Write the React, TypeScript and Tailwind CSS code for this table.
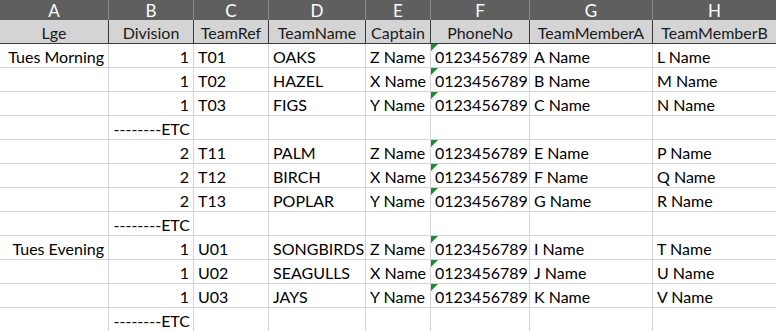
import React from "react";

const cols = ["A", "B", "C", "D", "E", "F", "G", "H"];
const widths = ["w-[109px]", "w-[85px]", "w-[75px]", "w-[97px]", "w-[65px]", "w-[99px]", "w-[123px]", "w-[124px]"];
const headers = ["Lge", "Division", "TeamRef", "TeamName", "Captain", "PhoneNo", "TeamMemberA", "TeamMemberB"];

type Row = string[] | null;
const rows: Row[] = [
  ["Tues Morning", "1", "T01", "OAKS", "Z Name", "0123456789", "A Name", "L Name"],
  ["", "1", "T02", "HAZEL", "X Name", "0123456789", "B Name", "M Name"],
  ["", "1", "T03", "FIGS", "Y Name", "0123456789", "C Name", "N Name"],
  null,
  ["", "2", "T11", "PALM", "Z Name", "0123456789", "E Name", "P Name"],
  ["", "2", "T12", "BIRCH", "X Name", "0123456789", "F Name", "Q Name"],
  ["", "2", "T13", "POPLAR", "Y Name", "0123456789", "G Name", "R Name"],
  null,
  ["Tues Evening", "1", "U01", "SONGBIRDS", "Z Name", "0123456789", "I Name", "T Name"],
  ["", "1", "U02", "SEAGULLS", "X Name", "0123456789", "J Name", "U Name"],
  ["", "1", "U03", "JAYS", "Y Name", "0123456789", "K Name", "V Name"],
  null,
];

function Tri() {
  return (
    <svg className="absolute left-0 top-0" width="7" height="7" viewBox="0 0 7 7">
      <polygon points="0,0 7,0 0,7" fill="#1f8a3b" />
    </svg>
  );
}

export default function App() {
  return (
    <div className="w-[776px] h-[331px] overflow-hidden bg-white text-black" style={{ fontFamily: "Lato, 'Liberation Sans', sans-serif" }}>
      <div className="flex h-[20px] bg-[#5f5f5f]">
        {cols.map((c, i) => (
          <div key={c} className={`${widths[i]} shrink-0 border-r border-[#8c8c8c] flex items-center justify-center text-white text-[17px] leading-none pt-[1px]`}>
            {c}
          </div>
        ))}
      </div>
      <div className="flex h-[24px] bg-[#d4d4d4] border-b border-[#3a3a3a]">
        {headers.map((h, i) => (
          <div key={h} className={`${widths[i]} shrink-0 border-r border-[#3a3a3a] flex items-center justify-center text-[16px] leading-none text-[#1a1a1a] pt-[2px]`}>
            {h}
          </div>
        ))}
      </div>
      {rows.map((r, ri) => (
        <div key={ri} className="flex h-[24px]">
          {cols.map((_, ci) => {
            let text = "";
            let align = "justify-start pl-[4px]";
            if (r) {
              text = r[ci];
              if (ci === 0 || ci === 1) align = "justify-end pr-[4px]";
            } else if (ci === 1) {
              text = "--------ETC";
              align = "justify-end pr-[3px]";
            }
            return (
              <div
                key={ci}
                className={`${widths[ci]} shrink-0 relative border-r border-b border-[#d4d4d4] flex items-center ${align} text-[16px] leading-none whitespace-nowrap pt-[2px]`}
              >
                {r && ci === 5 && <Tri />}
                {text}
              </div>
            );
          })}
        </div>
      ))}
    </div>
  );
}
